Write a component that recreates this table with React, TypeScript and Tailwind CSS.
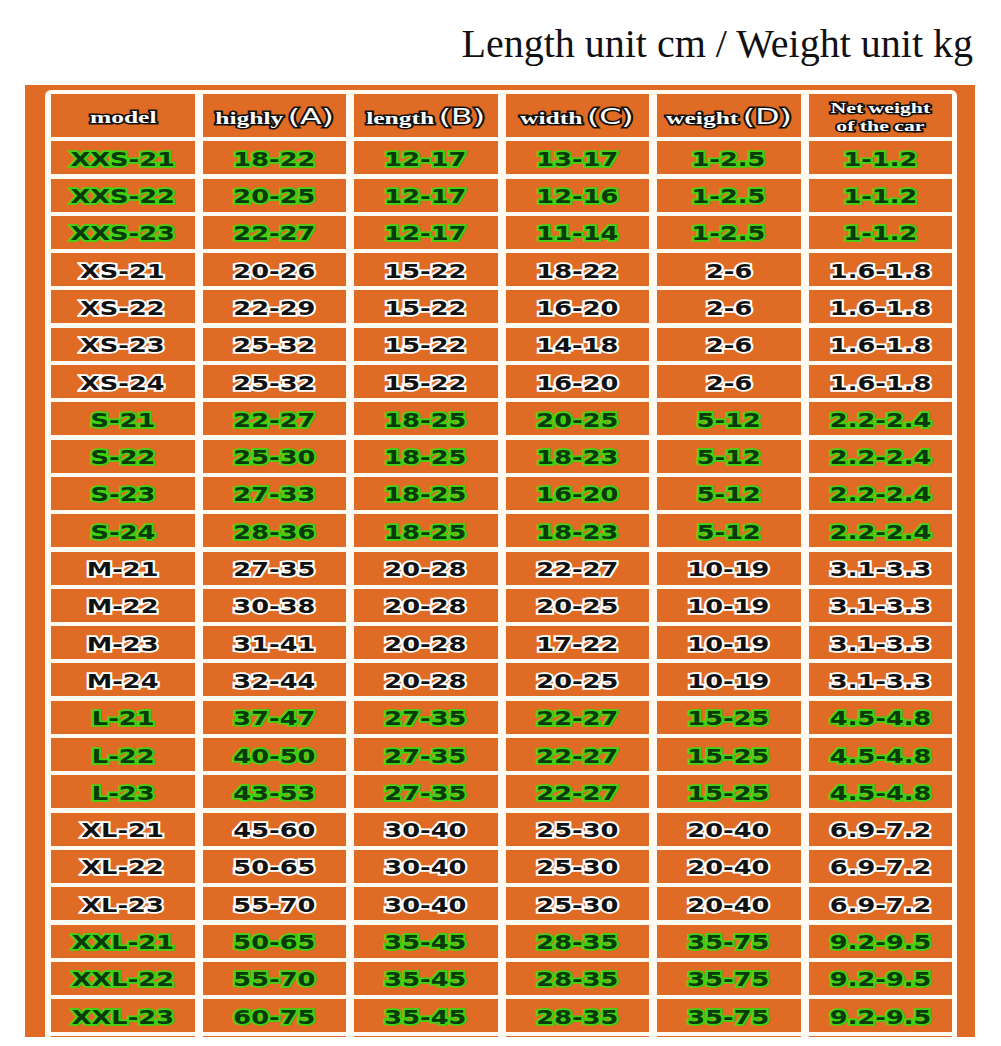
import React from 'react'

type Row = { cells: string[]; tone: 'green' | 'dark' }

const rows: Row[] = [
  { tone: 'green', cells: ['XXS-21', '18-22', '12-17', '13-17', '1-2.5', '1-1.2'] },
  { tone: 'green', cells: ['XXS-22', '20-25', '12-17', '12-16', '1-2.5', '1-1.2'] },
  { tone: 'green', cells: ['XXS-23', '22-27', '12-17', '11-14', '1-2.5', '1-1.2'] },
  { tone: 'dark', cells: ['XS-21', '20-26', '15-22', '18-22', '2-6', '1.6-1.8'] },
  { tone: 'dark', cells: ['XS-22', '22-29', '15-22', '16-20', '2-6', '1.6-1.8'] },
  { tone: 'dark', cells: ['XS-23', '25-32', '15-22', '14-18', '2-6', '1.6-1.8'] },
  { tone: 'dark', cells: ['XS-24', '25-32', '15-22', '16-20', '2-6', '1.6-1.8'] },
  { tone: 'green', cells: ['S-21', '22-27', '18-25', '20-25', '5-12', '2.2-2.4'] },
  { tone: 'green', cells: ['S-22', '25-30', '18-25', '18-23', '5-12', '2.2-2.4'] },
  { tone: 'green', cells: ['S-23', '27-33', '18-25', '16-20', '5-12', '2.2-2.4'] },
  { tone: 'green', cells: ['S-24', '28-36', '18-25', '18-23', '5-12', '2.2-2.4'] },
  { tone: 'dark', cells: ['M-21', '27-35', '20-28', '22-27', '10-19', '3.1-3.3'] },
  { tone: 'dark', cells: ['M-22', '30-38', '20-28', '20-25', '10-19', '3.1-3.3'] },
  { tone: 'dark', cells: ['M-23', '31-41', '20-28', '17-22', '10-19', '3.1-3.3'] },
  { tone: 'dark', cells: ['M-24', '32-44', '20-28', '20-25', '10-19', '3.1-3.3'] },
  { tone: 'green', cells: ['L-21', '37-47', '27-35', '22-27', '15-25', '4.5-4.8'] },
  { tone: 'green', cells: ['L-22', '40-50', '27-35', '22-27', '15-25', '4.5-4.8'] },
  { tone: 'green', cells: ['L-23', '43-53', '27-35', '22-27', '15-25', '4.5-4.8'] },
  { tone: 'dark', cells: ['XL-21', '45-60', '30-40', '25-30', '20-40', '6.9-7.2'] },
  { tone: 'dark', cells: ['XL-22', '50-65', '30-40', '25-30', '20-40', '6.9-7.2'] },
  { tone: 'dark', cells: ['XL-23', '55-70', '30-40', '25-30', '20-40', '6.9-7.2'] },
  { tone: 'green', cells: ['XXL-21', '50-65', '35-45', '28-35', '35-75', '9.2-9.5'] },
  { tone: 'green', cells: ['XXL-22', '55-70', '35-45', '28-35', '35-75', '9.2-9.5'] },
  { tone: 'green', cells: ['XXL-23', '60-75', '35-45', '28-35', '35-75', '9.2-9.5'] },
]

const headers: [string, string][] = [
  ['model', ''],
  ['highly', 'A'],
  ['length', 'B'],
  ['width', 'C'],
  ['weight', 'D'],
]

function HeaderCell({ label, letter }: { label: string; letter: string }) {
  return (
    <div className="flex h-[43px] items-center justify-center bg-[#e06b25] pt-[5px]">
      <span className="inline-block scale-x-[1.5] whitespace-nowrap text-white [paint-order:stroke_fill] [-webkit-text-stroke:3px_#111]">
        <span className="font-['Liberation_Serif',serif] text-[17px] font-bold">{label}</span>
        {letter && (
          <span className="ml-[3px] font-['DejaVu_Sans',sans-serif] text-[21px]">
            ({letter})
          </span>
        )}
      </span>
    </div>
  )
}

export default function App() {
  return (
    <div className="h-[1046px] w-[1001px] overflow-hidden bg-white">
      <div className="flex justify-end pr-[28px] pt-[24px]">
        <h1 className="font-['Liberation_Serif',serif] text-[40px] leading-none text-[#111]">
          Length unit cm / Weight unit kg
        </h1>
      </div>

      <div className="ml-[25px] mt-[21px] h-[952px] w-[950px] overflow-hidden bg-[#e06b25] pl-[20px] pr-[18px] pt-[5px]">
        <div className="rounded-t-[6px] bg-[#fffaf2] pl-[6px] pr-[5px] pt-[4px]">
          <div className="grid grid-cols-6 gap-x-[8px] gap-y-[4.3px]">
            {headers.map(([label, letter]) => (
              <HeaderCell key={label} label={label} letter={letter} />
            ))}
            <div className="flex h-[43px] items-center justify-center bg-[#e06b25] pt-[2px]">
              <span className="inline-block scale-x-[1.45] text-center font-['Liberation_Serif',serif] text-[15px] font-bold leading-[18px] text-white [paint-order:stroke_fill] [-webkit-text-stroke:3px_#111]">
                Net weight
                <br />
                of the car
              </span>
            </div>

            {rows.map((row) =>
              row.cells.map((cell, i) => (
                <div
                  key={row.cells[0] + i}
                  className="flex h-[33px] items-center justify-center bg-[#e06b25] pt-[3px]"
                >
                  <span
                    className={
                      row.tone === 'green'
                        ? "inline-block scale-x-[1.35] font-['DejaVu_Sans',sans-serif] text-[19px] font-bold leading-none text-[#0a3a0a] [paint-order:stroke_fill] [-webkit-text-stroke:3.5px_#3fd211]"
                        : "inline-block scale-x-[1.35] font-['DejaVu_Sans',sans-serif] text-[19px] font-bold leading-none text-[#111] [paint-order:stroke_fill] [-webkit-text-stroke:3.5px_#ffffff]"
                    }
                  >
                    {cell}
                  </span>
                </div>
              ))
            )}
            {/* next row, cut off by the frame */}
            {[0, 1, 2, 3, 4, 5].map((i) => (
              <div key={'tail' + i} className="h-[33px] bg-[#e06b25]" />
            ))}
          </div>
        </div>
      </div>
    </div>
  )
}
